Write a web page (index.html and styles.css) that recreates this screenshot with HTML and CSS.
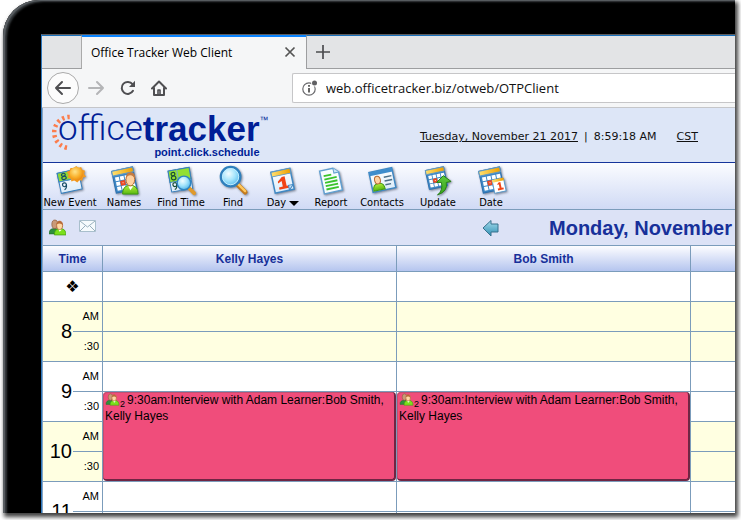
FILE: index.html
```html
<!DOCTYPE html>
<html lang="en">
<head>
<meta charset="utf-8">
<title>Office Tracker Web Client</title>
<link rel="stylesheet" href="styles.css">
</head>
<body>
<svg class="defs" aria-hidden="true">
  <defs>
    <linearGradient id="gold" x1="0" y1="0" x2="1" y2="0"><stop offset="0" stop-color="#ffe070"/><stop offset="1" stop-color="#eda000"/></linearGradient>
    <linearGradient id="paper" x1="0" y1="0" x2="0" y2="1"><stop offset="0" stop-color="#fff"/><stop offset="1" stop-color="#dcecfa"/></linearGradient>
    <linearGradient id="lime" x1="0" y1="0" x2="0" y2="1"><stop offset="0" stop-color="#b6f03c"/><stop offset="1" stop-color="#58b812"/></linearGradient>
    <linearGradient id="leaf" x1="0" y1="0" x2="0" y2="1"><stop offset="0" stop-color="#5cc83c"/><stop offset="1" stop-color="#3aa41c"/></linearGradient>
    <radialGradient id="sun" cx=".4" cy=".35" r=".7"><stop offset="0" stop-color="#ffe48a"/><stop offset=".6" stop-color="#f9b02a"/><stop offset="1" stop-color="#e88410"/></radialGradient>
    <radialGradient id="glass" cx=".4" cy=".35" r=".7"><stop offset="0" stop-color="#f2fdff"/><stop offset=".5" stop-color="#a4e4fc"/><stop offset="1" stop-color="#4cb4ea"/></radialGradient>
    <linearGradient id="teal" x1="0" y1="0" x2="0" y2="1"><stop offset="0" stop-color="#a6dcec"/><stop offset="1" stop-color="#2f8fb4"/></linearGradient>
    <symbol id="people" viewBox="0 0 16 16">
      <path d="M0 14q0-5 5-5t5 5z" fill="#2f8f3c" stroke="#236b2c" stroke-width=".6"/>
      <ellipse cx="5.500" cy="5" rx="2.800" ry="4" fill="#c99a78" stroke="#8d5a3c" stroke-width=".7"/>
      <path d="M5 15q0-6 5.500-6t5.500 6z" fill="#7be01c" stroke="#459c10" stroke-width=".7"/>
      <ellipse cx="10" cy="6" rx="2.800" ry="3.900" fill="#ffd9a4" stroke="#b36432" stroke-width=".8"/>
      <path d="M7 5q1-4 4-3 2 1 2 4-2-3-6-1z" fill="#b76a38"/>
      <path d="M9 10l1 2 2-2z" fill="#fff"/>
    </symbol>
    <symbol id="month" viewBox="0 0 32 32">
      <g transform="rotate(-12 16 16)">
        <rect x="5" y="4" width="22" height="23" fill="#3d86c4" stroke="#2c70ae"/>
        <rect x="5" y="4" width="22" height="5" fill="url(#gold)" stroke="#5c98c8"/>
        <g fill="#fff"><path d="M7 11h4v4H7zM12 11h4v4h-4zM17 11h4v4h-4zM22 11h4v4h-4zM7 16h4v4H7zM17 16h4v4h-4zM22 16h4v4h-4zM7 21h4v4H7zM12 21h4v4h-4zM17 21h4v4h-4zM22 21h4v4h-4z"/></g>
        <path d="M12.500 16.500h3v3h-3z" fill="#fff" stroke="#f04820" stroke-width="2"/>
      </g>
    </symbol>
  </defs>
</svg>

<div class="device">
  <div class="screen">
    <header class="browser">
      <div class="tabs">
        <span class="tab-gap"></span>
        <div class="tab">
          <span>Office Tracker Web Client</span>
          <button class="plain" aria-label="Close tab"><svg width="12" height="12" viewBox="0 0 12 12"><path d="M1.500 1.500l9 9M10.500 1.500l-9 9" stroke="#555" stroke-width="1.700"/></svg></button>
        </div>
        <div class="tab-rest">
          <button class="plain" aria-label="New tab"><svg width="14" height="14" viewBox="0 0 14 14"><path d="M7 0v14M0 7h14" stroke="#4c4c4f" stroke-width="1.700"/></svg></button>
        </div>
      </div>
      <div class="nav">
        <button class="back" aria-label="Back"><svg width="18" height="18" viewBox="0 0 18 18" fill="none" stroke="#4f4f52" stroke-width="2" stroke-linecap="round" stroke-linejoin="round"><path d="M16 9H2M8 3L2 9l6 6"/></svg></button>
        <button class="plain" aria-label="Forward"><svg width="18" height="18" viewBox="0 0 18 18" fill="none" stroke="#b4b5b7" stroke-width="2" stroke-linecap="round" stroke-linejoin="round"><path d="M2 9h14M10 3l6 6-6 6"/></svg></button>
        <button class="plain" aria-label="Reload"><svg width="16" height="16" viewBox="0 0 16 16"><path d="M12.500 4.200A6 6 0 1 0 13 10.800" fill="none" stroke="#4f4f52" stroke-width="2" stroke-linecap="round"/><path d="M15 .8V7H9z" fill="#4f4f52"/></svg></button>
        <button class="plain" aria-label="Home"><svg width="16" height="16" viewBox="0 0 16 16" fill="none" stroke="#4f4f52" stroke-width="2" stroke-linejoin="round" stroke-linecap="round"><path d="M1 8.500L8 1.500l7 7M3 8v7h10V8"/><path d="M7 15v-5h2v5" stroke-width="1.600"/></svg></button>
        <div class="address">
          <svg width="16" height="16" viewBox="0 0 16 16"><circle cx="7" cy="9" r="6.200" fill="none" stroke="#6a6a6d" stroke-width="1.200"/><path d="M7 8v4.500M7 5v1.700" stroke="#555" stroke-width="1.800"/><circle cx="12.500" cy="3" r="3.400" fill="#fff"/><circle cx="12.500" cy="3" r="2.500" fill="#606063"/></svg>
          <input type="text" aria-label="Address" value="web.officetracker.biz/otweb/OTPClient">
        </div>
      </div>
    </header>

    <main class="app">
      <div class="banner">
        <svg class="rays" width="22" height="40" viewBox="0 0 22 40"><path d="M19.700 2.900A15.500 15.500 0 1 0 19.700 33.900" fill="none" stroke="#fb7d4c" stroke-width="4.500" stroke-dasharray="2.400 3"/></svg>
        <div class="brand">
          <div class="wordmark"><span>office</span><b>tracker</b><small>™</small></div>
          <div class="tagline">point.click.schedule</div>
        </div>
        <div class="clock"><a href="#today">Tuesday, November 21 2017</a><span>|</span><span>8:59:18 AM</span><a class="zone" href="#zone">CST</a></div>
      </div>

      <nav class="toolbar">
        <button><svg viewBox="0 0 32 32"><g transform="rotate(-12 16 16)"><path d="M4 6h22v21H4z" fill="url(#paper)" stroke="#357fbe"/><path d="M4 6h15v9H4z" fill="#8ed934" stroke="#357fbe"/><path d="M4 15h22" stroke="#4d90c6"/><g fill="none" stroke="#174c66" stroke-width="1.200"><ellipse cx="10" cy="8.700" rx="2" ry="1.500"/><ellipse cx="10" cy="12" rx="2.300" ry="1.700"/><ellipse cx="9" cy="19" rx="2" ry="2"/><path d="M11 19q0 4-3 5"/></g></g><path d="M22 1l2 2 3-1 1 3 3 1-1 3 2 3-3 1-1 3-3 0-2 2-3-2-3 1-1-3-3-1 1-3-2-3 3-1 1-3 3 0z" fill="#f29b22"/><circle cx="22" cy="9" r="7" fill="url(#sun)"/></svg><span>New Event</span></button>
        <button><svg viewBox="0 0 32 32"><use href="#month"/><path d="M14 30q0-9 8-9t8 9z" fill="url(#lime)" stroke="#3e9a10"/><path d="M20 22l2 4 3-4z" fill="#fff"/><ellipse cx="22" cy="15" rx="4.500" ry="6.500" fill="#ffd2a0" stroke="#b86a34"/><path d="M17.500 14q0-7 5-6.500 5 0 4.500 7-2-4-5-4t-4.500 3.500z" fill="#c47b42"/></svg><span>Names</span></button>
        <button><svg viewBox="0 0 32 32"><g transform="rotate(-10 16 16)"><path d="M4 4h22v22H4z" fill="url(#paper)" stroke="#357fbe"/><path d="M4 4h22v12H4z" fill="#92df32" stroke="#357fbe"/><path d="M13 4v22" stroke="#72acd4"/><g fill="none" stroke="#174c36" stroke-width="1.200"><ellipse cx="8.500" cy="8" rx="2" ry="1.700"/><ellipse cx="8.500" cy="12" rx="2.300" ry="2"/><ellipse cx="8.500" cy="19" rx="2" ry="2"/><path d="M10.500 19q0 4-3 5"/></g></g><path d="M24 24l5 5" stroke="#e09a2c" stroke-width="4" stroke-linecap="round"/><circle cx="18.500" cy="18.500" r="7" fill="url(#glass)" stroke="#2f84c0" stroke-width="1.500"/></svg><span>Find Time</span></button>
        <button><svg viewBox="0 0 32 32"><path d="M20 20l8 8" stroke="#c47a1c" stroke-width="5" stroke-linecap="round"/><path d="M21 20l7 7" stroke="#ffc85c" stroke-width="2.500" stroke-linecap="round"/><circle cx="13" cy="12" r="10" fill="url(#glass)" stroke="#2f80bd" stroke-width="2.500"/><circle cx="13" cy="12" r="8.400" fill="none" stroke="#c4efff"/></svg><span>Find</span></button>
        <button><svg viewBox="0 0 32 32"><g transform="rotate(-12 16 16)"><path d="M5 5h20v22H5z" fill="url(#paper)" stroke="#3f88c4" stroke-width="1.500"/><path d="M5 5h20v5H5z" fill="url(#gold)" stroke="#5797c8"/><path d="M10 16l5-4h3v10h3v2.500H10V22h4v-6l-4 2z" fill="#f04416"/><path d="M20 27v-5h5z" fill="#c5dff3" stroke="#3f88c4"/></g></svg><span>Day <i class="caret"></i></span></button>
        <button><svg viewBox="0 0 32 32"><g transform="rotate(-12 16 16)"><path d="M6 4h14l5 5v19H6z" fill="#f7fcff" stroke="#609fd0" stroke-width="1.500"/><path d="M20 4v5h5" fill="#cce5f6" stroke="#609fd0"/><path d="M9 10h8M9 13.500h13M9 17h13M9 20.500h13M9 24h13" stroke="#3bc42c" stroke-width="1.900"/></g></svg><span>Report</span></button>
        <button><svg viewBox="0 0 32 32"><g transform="rotate(-12 16 16)"><path d="M4 5h24v21H4z" fill="url(#paper)" stroke="#3f88c4" stroke-width="1.500"/><path d="M4 5h24v4H4z" fill="#3f8dcc"/><path d="M18 13h8M18 17h8M18 21h6" stroke="#4b6f87" stroke-width="1.500"/><path d="M5 25q0-7 6-7t6 7z" fill="url(#lime)" stroke="#3e9a10"/><ellipse cx="11" cy="14.500" rx="3" ry="4" fill="#ffd2a0" stroke="#b86a34"/></g></svg><span>Contacts</span></button>
        <button><svg viewBox="0 0 32 32"><use href="#month" x="0" y="0" width="28" height="28"/><path d="M15 31q6-5 4-13h-5l7-7 8 6-5 1q2 9-9 13z" fill="url(#leaf)" stroke="#267f16"/></svg><span>Update</span></button>
        <button><svg viewBox="0 0 32 32"><use href="#month"/><g transform="rotate(-12 24 22)"><path d="M18 15h12v13H18z" fill="#fff" stroke="#5b9bcc"/><path d="M18 14h12v3H18z" fill="url(#gold)"/><path d="M22 20l2-2h2v6h2v2h-6v-2h2v-4z" fill="#f04416"/></g></svg><span>Date</span></button>
      </nav>

      <div class="datebar">
        <button class="plain" aria-label="People"><svg width="17" height="17"><use href="#people"/></svg></button>
        <button class="plain mail" aria-label="Mail"><svg width="17" height="12" viewBox="0 0 17 12"><path d="M.5.5h16v11H.5z" fill="#f6fbfd" stroke="#a9bfcc"/><path d="M1 1l7.500 6L16 1M1 11l5-5M16 11l-5-5" fill="none" stroke="#98afbd"/></svg></button>
        <button class="plain prev" aria-label="Previous day"><svg width="18" height="18" viewBox="0 0 18 18"><path d="M1 9l8-7.500V5h7v8H9v4z" fill="url(#teal)" stroke="#37718d" stroke-linejoin="round"/></svg></button>
        <h1>Monday, November</h1>
      </div>

      <table class="schedule">
        <colgroup><col class="c-hour"><col class="c-half"><col class="c-person"><col class="c-person"><col class="c-person"></colgroup>
        <thead><tr><th colspan="2">Time</th><th>Kelly Hayes</th><th>Bob Smith</th><th></th></tr></thead>
        <tbody>
          <tr><td colspan="2" class="allday">❖</td><td></td><td></td><td></td></tr>
          <tr class="alt"><th rowspan="2" class="hour">8</th><td class="half">AM</td><td></td><td></td><td></td></tr>
          <tr class="alt"><td class="half">:30</td><td></td><td></td><td></td></tr>
          <tr><th rowspan="2" class="hour">9</th><td class="half">AM</td><td></td><td></td><td></td></tr>
          <tr><td class="half">:30</td>
            <td rowspan="3" class="booked"><div class="event"><svg width="15" height="13"><use href="#people"/></svg><sub>2</sub>9:30am:Interview with Adam Learner:Bob Smith, Kelly Hayes</div></td>
            <td rowspan="3" class="booked"><div class="event"><svg width="15" height="13"><use href="#people"/></svg><sub>2</sub>9:30am:Interview with Adam Learner:Bob Smith, Kelly Hayes</div></td>
            <td></td></tr>
          <tr class="alt"><th rowspan="2" class="hour">10</th><td class="half">AM</td><td></td></tr>
          <tr class="alt"><td class="half">:30</td><td></td></tr>
          <tr><th rowspan="2" class="hour">11</th><td class="half">AM</td><td></td><td></td><td></td></tr>
          <tr><td class="half"></td><td></td><td></td><td></td></tr>
        </tbody>
      </table>
    </main>
  </div>
</div>
</body>
</html>
```
FILE: styles.css
```css
* { box-sizing: border-box; }
body { margin: 0; background: #fff; overflow: hidden; font-family: "Liberation Sans", Arial, sans-serif; color: #000; }
.defs { position: absolute; width: 0; height: 0; }
svg { display: block; }
button { font: inherit; color: inherit; border: 0; background: none; padding: 0; }
a { color: inherit; }

.device {
  height: calc(100vh - 7px);
  margin: 0 6px 7px 3px;
  padding: 34px 0 0 38px;
  overflow: hidden;
  background: #000;
  border-top-left-radius: 36px;
  box-shadow: inset 2px 1px 1px #5b6064, inset 4px 2px 2px #34383b, 2px 3px 4px 1px rgba(0, 0, 0, .75);
}
.screen { border-top: 1px solid #5b5d60; border-left: 1px solid #2f78bd; background: #fff; }

/* Browser chrome */
.browser { font-family: "Open Sans", "Noto Sans", sans-serif; background: #f5f6f7; border-bottom: 1px solid #c5c6c9; }
.tabs { display: flex; height: 34px; }
.tab-gap, .tab-rest { background: #e3e4e6; border-top: 1px solid #1b72bd; border-bottom: 1px solid #9d9ea0; }
.tab-gap { width: 40px; border-right: 1px solid #aaa; }
.tab { display: flex; align-items: center; justify-content: space-between; width: 224px; padding: 0 10px 2px 9px; border-top: 2px solid #0a84ff; font-size: 12px; }
.tab-rest { flex: 1; display: flex; align-items: center; padding-left: 9px; border-left: 1px solid #9d9ea0; }
.nav { display: flex; align-items: center; gap: 15px; height: 38px; padding-left: 5px; }
.back { display: grid; place-items: center; width: 32px; height: 32px; margin-right: -7px; border: 1px solid #aaa; border-radius: 50%; background: #fcfcfc; }
.address { flex: 1; display: flex; align-items: center; gap: 8px; height: 30px; margin-left: 110px; padding-left: 9px; background: #fff; border: 1px solid #c6c6c8; border-right: 0; border-radius: 2px 0 0 2px; }
.address input { flex: 1; min-width: 0; padding: 0; border: 0; outline: 0; background: none; font: 13px "Open Sans", sans-serif; color: #111; }

/* Application banner */
.app { border-left: 1px solid #87a5c2; }
.banner { display: flex; align-items: flex-start; height: 55px; padding: 4px 0 0 7px; background: #dde6f7; border-bottom: 1px solid #15349b; color: #001e96; }
.rays { margin-top: 2px; margin-right: -14px; }
.wordmark { display: flex; align-items: flex-start; font-size: 35px; line-height: 34px; }
.wordmark span { font-family: Roboto, "Liberation Sans", sans-serif; font-weight: 300; }
.wordmark small { font-size: 9px; line-height: 16px; }
.tagline { margin: 0 9px 0 0; font-size: 11px; line-height: 13px; text-align: right; font-weight: bold; }
.clock { display: flex; gap: 6px; margin-left: auto; padding: 17px 37px 0 0; font: 11px/15px "DejaVu Sans", Verdana, sans-serif; color: #111; white-space: nowrap; }
.zone { margin-left: 14px; }

.toolbar { display: grid; grid-template-columns: 54px 54px 60px 44px 56px 40px 62px 50px 56px; height: 47px; padding-top: 2px; background: linear-gradient(#fbfcff, #d0daf5); border-bottom: 1px solid #7b9cbb; font: 11px/13px "DejaVu Sans Condensed", Tahoma, sans-serif; }
.toolbar button { display: flex; flex-direction: column; align-items: center; white-space: nowrap; }
.toolbar svg { width: 31px; height: 31px; filter: drop-shadow(1px 1px 1px rgba(50, 60, 80, .6)); }
.caret { display: inline-block; border: 5px solid transparent; border-top-color: #000; border-bottom: 0; }

.datebar { display: flex; align-items: center; height: 36px; padding-left: 6px; background: #dce2f6; border-bottom: 1px solid #7b9cbb; }
.mail { margin: 0 386px 4px 13px; }
.datebar h1 { margin: 0 0 0 49px; font-size: 20px; line-height: 24px; color: #17309a; white-space: nowrap; }

/* Schedule grid */
.schedule { width: 942px; table-layout: fixed; border-collapse: separate; border-spacing: 0; }
.c-hour, .c-half { width: 30px; }
.c-person { width: 294px; }
.schedule td, .schedule th { height: 30px; padding: 0; border: solid #7b9cbb; border-width: 0 1px 1px 0; }
.schedule thead th { height: 26px; background: linear-gradient(#fdfdff, #b5c5ef); color: #17309a; font-size: 12px; }
.schedule .alt { background: #ffffe1; }
.schedule .allday { text-align: center; font: 16px/20px "DejaVu Sans", sans-serif; }
.schedule .hour { padding-right: 1px; border-right: 0; font-size: 20px; font-weight: normal; text-align: right; }
.schedule .half { padding: 0 3px 2px 0; font-size: 11px; text-align: right; }
.schedule .booked { vertical-align: top; background: #fff; }
.event { height: 89px; padding: 0 0 0 2px; overflow: hidden; background: #f04d7b; border: solid #702543; border-width: 0 2px 2px 0; border-radius: 4px; box-shadow: inset 1px 1px #c05070; font-size: 12px; line-height: 16px; }
.event svg { display: inline-block; vertical-align: -2px; }
.event sub { margin-right: 2px; font-size: 9px; line-height: 0; vertical-align: -3px; }
```
